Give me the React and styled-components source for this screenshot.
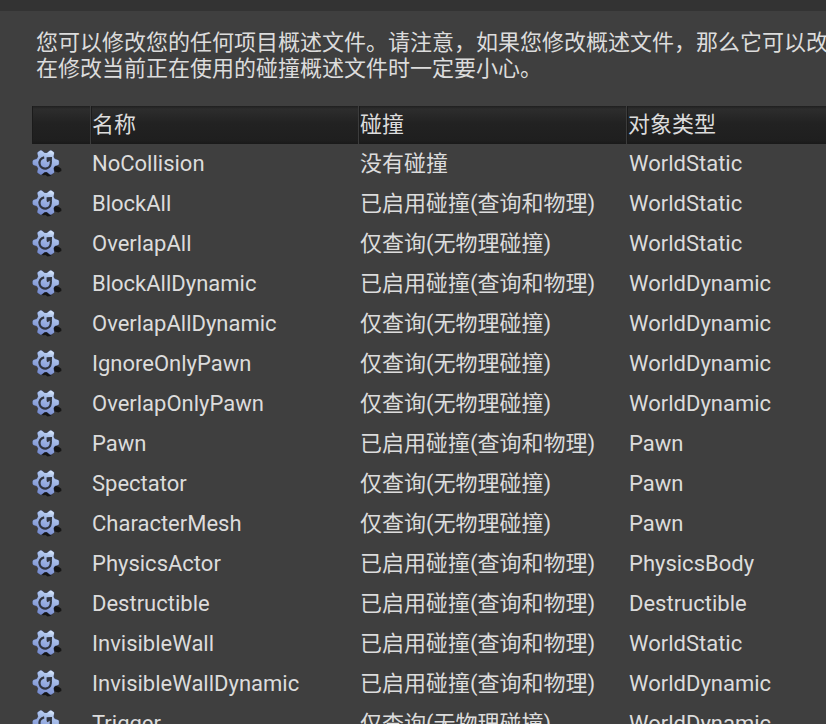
import React from "react";
import styled, { createGlobalStyle } from "styled-components";

const Global = createGlobalStyle`
  * { box-sizing: border-box; }
  html, body { margin: 0; height: 100%; overflow: hidden; background: #3f3f3f; }
  body {
    font-family: Roboto, "Noto Sans CJK SC", sans-serif;
    font-size: 22px;
    line-height: 26px;
    color: #dcdcdc;
  }
`;

const Panel = styled.main`
  border-top: 11px solid #333;
  padding: 19px 0 0 32px;
`;

const Note = styled.p`
  margin: 0 0 24px;
  padding-left: 4px;
  white-space: nowrap;
`;

const Table = styled.table`
  width: 100%;
  border-spacing: 0;
  table-layout: fixed;
`;

const HeaderCell = styled.th`
  height: 38px;
  width: ${(p) => p.$width || "auto"};
  padding: 0 1px;
  text-align: left;
  font-weight: 400;
  white-space: nowrap;
  background: linear-gradient(#1f1f1f, #2d2d2d 8%, #222 45%, #1f1f1f 90%, #191919);
  border-right: 1px solid #3c3c3c;
  box-shadow: inset 1px 0 #1b1b1b;

  &:last-child {
    border-right: 0;
  }
`;

const Cell = styled.td`
  height: 40px;
  padding: 0 1px;
  white-space: nowrap;

  &:last-child {
    padding-left: 2px;
  }
`;

const IconCell = styled.td`
  height: 40px;
  padding: 0;
`;

const Gear = styled.svg`
  display: block;
  width: 32px;
  height: 32px;
`;

const toothAngles = [-30, 30, 90, 150, 210, 270];

function GearShape() {
  return (
    <>
      <circle cx="13.8" cy="14.5" r="9.5" />
      {toothAngles.map((a) => (
        <path
          key={a}
          d="M9.6 7.5 L11.2 2.6 Q11.5 1.5 12.5 1.5 H15.1 Q16.1 1.5 16.4 2.6 L18 7.5Z"
          transform={`rotate(${a} 13.8 14.5)`}
        />
      ))}
    </>
  );
}

function ProfileIcon() {
  return (
    <Gear viewBox="0 0 32 32" aria-hidden="true">
      <defs>
        <linearGradient id="gearFace" gradientUnits="userSpaceOnUse" x1="21" y1="2" x2="11" y2="27">
          <stop offset="0" stopColor="#e6f3ff" />
          <stop offset="0.25" stopColor="#afc5ec" />
          <stop offset="0.6" stopColor="#94aae0" />
          <stop offset="1" stopColor="#768bcf" />
        </linearGradient>
        <clipPath id="gearClip">
          <circle cx="13.8" cy="14.5" r="9.5" />
          {toothAngles.map((a) => (
            <path
              key={a}
              d="M9.6 7.5 L11.2 2.6 Q11.5 1.5 12.5 1.5 H15.1 Q16.1 1.5 16.4 2.6 L18 7.5Z"
              transform={`rotate(${a} 13.8 14.5)`}
            />
          ))}
        </clipPath>
      </defs>
      <path
        d="M8 25.5 L11 27.2 L13.5 27 L15.5 28.6 L18.5 28 L20 26 L22 23.2 L26.5 24.4 L29.4 23 L29.3 20.8 L27 19 L22 17Z"
        fill="#161616"
      />
      <g fill="#5b6da3" stroke="#5b6da3" strokeWidth="0.5">
        <GearShape />
      </g>
      <rect width="32" height="32" fill="url(#gearFace)" clipPath="url(#gearClip)" />
      <path d="M12.2 9.3 A5.7 5.7 0 1 0 18.6 13.2" fill="none" stroke="#30343e" strokeWidth="2.2" />
      <path d="M14.6 9.2 L20 9 L19.8 14.2 L17.9 12.7 L15.4 14.2 L14.6 13Z" fill="#30343e" />
    </Gear>
  );
}

const blocking = "已启用碰撞(查询和物理)";
const queryOnly = "仅查询(无物理碰撞)";

const profiles = [
  ["NoCollision", "没有碰撞", "WorldStatic"],
  ["BlockAll", blocking, "WorldStatic"],
  ["OverlapAll", queryOnly, "WorldStatic"],
  ["BlockAllDynamic", blocking, "WorldDynamic"],
  ["OverlapAllDynamic", queryOnly, "WorldDynamic"],
  ["IgnoreOnlyPawn", queryOnly, "WorldDynamic"],
  ["OverlapOnlyPawn", queryOnly, "WorldDynamic"],
  ["Pawn", blocking, "Pawn"],
  ["Spectator", queryOnly, "Pawn"],
  ["CharacterMesh", queryOnly, "Pawn"],
  ["PhysicsActor", blocking, "PhysicsBody"],
  ["Destructible", blocking, "Destructible"],
  ["InvisibleWall", blocking, "WorldStatic"],
  ["InvisibleWallDynamic", blocking, "WorldDynamic"],
  ["Trigger", queryOnly, "WorldDynamic"],
];

export default function App() {
  return (
    <>
      <Global />
      <Panel lang="zh-CN">
        <Note>
          您可以修改您的任何项目概述文件。请注意，如果您修改概述文件，那么它可以改
          <br />
          在修改当前正在使用的碰撞概述文件时一定要小心。
        </Note>
        <Table>
          <thead>
            <tr>
              <HeaderCell $width="59px" />
              <HeaderCell $width="268px" scope="col">名称</HeaderCell>
              <HeaderCell $width="268px" scope="col">碰撞</HeaderCell>
              <HeaderCell scope="col">对象类型</HeaderCell>
            </tr>
          </thead>
          <tbody>
            {profiles.map(([name, collision, objectType]) => (
              <tr key={name}>
                <IconCell><ProfileIcon /></IconCell>
                <Cell>{name}</Cell>
                <Cell>{collision}</Cell>
                <Cell>{objectType}</Cell>
              </tr>
            ))}
          </tbody>
        </Table>
      </Panel>
    </>
  );
}
